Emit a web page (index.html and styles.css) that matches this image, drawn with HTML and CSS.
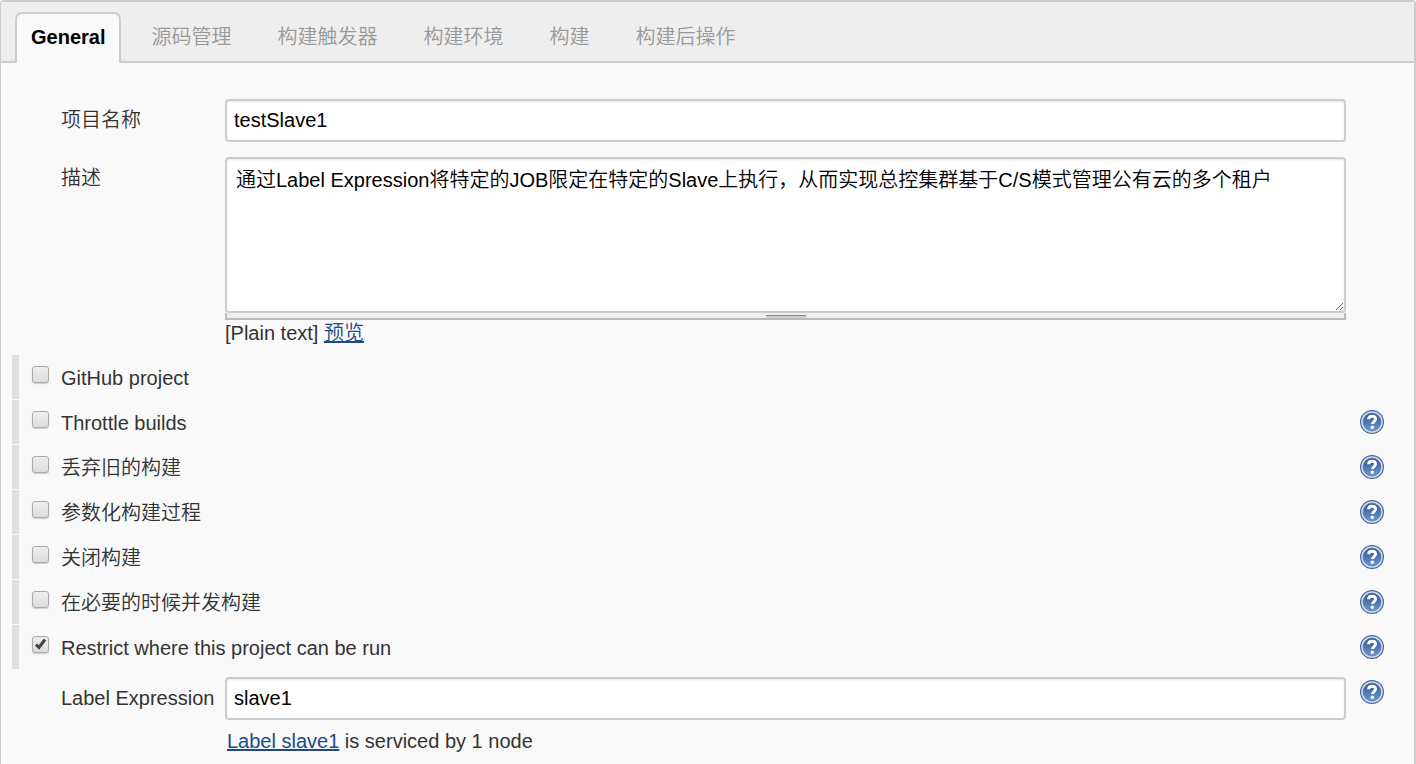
FILE: index.html
```html
<!DOCTYPE html>
<html lang="zh-CN">
<head>
  <meta charset="UTF-8" />
  <meta name="viewport" content="width=device-width, initial-scale=1.0" />
  <title>testSlave1 Config</title>
  <link rel="stylesheet" href="styles.css">
</head>
<body>
  <svg class="defs" width="0" height="0" aria-hidden="true">
    <defs>
      <linearGradient id="helpFill" x1="0" y1="0" x2="0" y2="1">
        <stop offset="0" stop-color="#2c5593" />
        <stop offset="1" stop-color="#6f97cb" />
      </linearGradient>
      <symbol id="help" viewBox="0 0 24 24">
        <circle cx="12" cy="12" r="11.4" fill="#d3deed" stroke="#45679a" stroke-width="1.2" />
        <circle cx="12" cy="12" r="9" fill="url(#helpFill)" stroke="#5a7fb5" stroke-width="0.8" />
        <path d="M8.6 9.2C8.6 7 10.2 6.2 12.1 6.2c2.1 0 3.5 1.1 3.5 2.9 0 2.5-3.1 2.4-3.1 5" fill="none" stroke="#fff" stroke-width="2.9" />
        <circle cx="12.3" cy="17.2" r="1.7" fill="#fff" />
      </symbol>
    </defs>
  </svg>

  <form class="config">
    <nav class="tabs">
      <a class="tab active" href="#general">General</a>
      <a class="tab" href="#scm">源码管理</a>
      <a class="tab" href="#triggers">构建触发器</a>
      <a class="tab" href="#environment">构建环境</a>
      <a class="tab" href="#build">构建</a>
      <a class="tab" href="#post-build">构建后操作</a>
    </nav>

    <div class="section" id="general">
      <div class="field">
        <label for="name">项目名称</label>
        <input class="text" type="text" id="name" value="testSlave1">
      </div>

      <div class="field">
        <label for="description">描述</label>
        <div class="control">
          <textarea class="text area" id="description">通过Label Expression将特定的JOB限定在特定的Slave上执行，从而实现总控集群基于C/S模式管理公有云的多个租户</textarea>
          <div class="handle"><span class="grip"></span></div>
          <div class="markup">[Plain text] <a href="#preview">预览</a></div>
        </div>
      </div>

      <div class="options">
        <div class="option">
          <input type="checkbox" id="github">
          <label for="github">GitHub project</label>
        </div>
        <div class="option">
          <input type="checkbox" id="throttle">
          <label for="throttle">Throttle builds</label>
          <a class="help" href="#help-throttle" aria-label="Help"><svg><use href="#help" /></svg></a>
        </div>
        <div class="option">
          <input type="checkbox" id="discard">
          <label for="discard">丢弃旧的构建</label>
          <a class="help" href="#help-discard" aria-label="Help"><svg><use href="#help" /></svg></a>
        </div>
        <div class="option">
          <input type="checkbox" id="params">
          <label for="params">参数化构建过程</label>
          <a class="help" href="#help-params" aria-label="Help"><svg><use href="#help" /></svg></a>
        </div>
        <div class="option">
          <input type="checkbox" id="disable">
          <label for="disable">关闭构建</label>
          <a class="help" href="#help-disable" aria-label="Help"><svg><use href="#help" /></svg></a>
        </div>
        <div class="option">
          <input type="checkbox" id="concurrent">
          <label for="concurrent">在必要的时候并发构建</label>
          <a class="help" href="#help-concurrent" aria-label="Help"><svg><use href="#help" /></svg></a>
        </div>
        <div class="option">
          <input type="checkbox" id="restrict" checked>
          <label for="restrict">Restrict where this project can be run</label>
          <a class="help" href="#help-restrict" aria-label="Help"><svg><use href="#help" /></svg></a>
        </div>
      </div>

      <div class="field">
        <label for="label">Label Expression</label>
        <div class="control">
          <input class="text" type="text" id="label" value="slave1">
          <div class="note"><a href="#label-slave1">Label slave1</a> is serviced by 1 node</div>
        </div>
        <a class="help" href="#help-label" aria-label="Help"><svg><use href="#help" /></svg></a>
      </div>
    </div>
  </form>
</body>
</html>
```
FILE: styles.css
```css
* {
  box-sizing: border-box;
}

body {
  margin: 0;
  background: #f9f9f9;
  font-family: "Liberation Sans", Arial, "Noto Sans CJK SC", sans-serif;
  font-size: 20px;
  font-weight: 350;
  line-height: 24px;
  color: #333;
}

a {
  color: #204a87;
}

.defs {
  position: absolute;
}

.config {
  min-height: 100vh;
  border: 2px solid #ccc;
  border-left-width: 1px;
  border-bottom: none;
  border-radius: 4px 4px 0 0;
}

.tabs {
  display: flex;
  gap: 14px;
  padding: 10px 14px 0;
  background: #eee;
  border-bottom: 2px solid #ccc;
}

.tab {
  padding: 11px 14px 12px;
  border: 2px solid transparent;
  border-bottom: none;
  color: #999;
  text-decoration: none;
}

.tab.active {
  margin-bottom: -2px;
  background: #f9f9f9;
  border-color: #ccc;
  border-radius: 7px 7px 0 0;
  color: #000;
  font-weight: bold;
}

.section {
  padding-top: 36px;
}

.field {
  display: grid;
  grid-template-columns: 164px 1fr 24px;
  margin-bottom: 15px;
  padding: 0 30px 0 60px;
}

.field > label {
  padding-top: 9px;
}

.field > .text,
.control {
  margin-right: 14px;
}

.text {
  display: block;
  width: 100%;
  height: 43px;
  padding: 0 7px;
  border: 2px solid #ccc;
  border-radius: 4px;
  background: #fff;
  box-shadow: inset 0 1px 2px #e6e6e6;
  font: inherit;
  color: #000;
}

.field > .text {
  width: auto;
}

.area {
  height: 156px;
  padding: 9px;
  resize: vertical;
}

.handle {
  display: flex;
  justify-content: center;
  height: 7px;
  background: #eee;
  border: 2px solid #bbb;
  border-top: none;
}

.grip {
  width: 40px;
  height: 3px;
  margin-top: 2px;
  background: #ccc;
  border-top: 1px solid #888;
}

.markup {
  padding-top: 1px;
}

.options {
  margin: -5px 30px 8px 11px;
}

.option {
  display: flex;
  align-items: flex-start;
  height: 44px;
  margin-bottom: 1px;
  padding-left: 13px;
  border-left: 7px solid #e0e0e0;
}

.option input {
  appearance: none;
  width: 17px;
  height: 17px;
  margin: 11px 12px 0 0;
  border: 1px solid #aaa;
  border-radius: 3px;
  background: linear-gradient(#eee, #dcdcdc);
  box-shadow: 0 1px 1px #ccc;
}

.option input:checked {
  background: url("data:image/svg+xml,%3Csvg xmlns='http://www.w3.org/2000/svg' viewBox='0 0 15 15'%3E%3Cpath d='M3 7.5l3 3 6-8' fill='none' stroke='%23444' stroke-width='3'/%3E%3C/svg%3E"), linear-gradient(#eee, #dcdcdc);
}

.option label {
  flex: 1;
  padding-top: 11px;
}

.help {
  width: 24px;
  height: 24px;
}

.option .help {
  margin-top: 10px;
}

.field .help {
  margin-top: 3px;
}

.help svg {
  display: block;
  width: 24px;
  height: 24px;
}

.note {
  padding: 9px 2px 0;
}
```
